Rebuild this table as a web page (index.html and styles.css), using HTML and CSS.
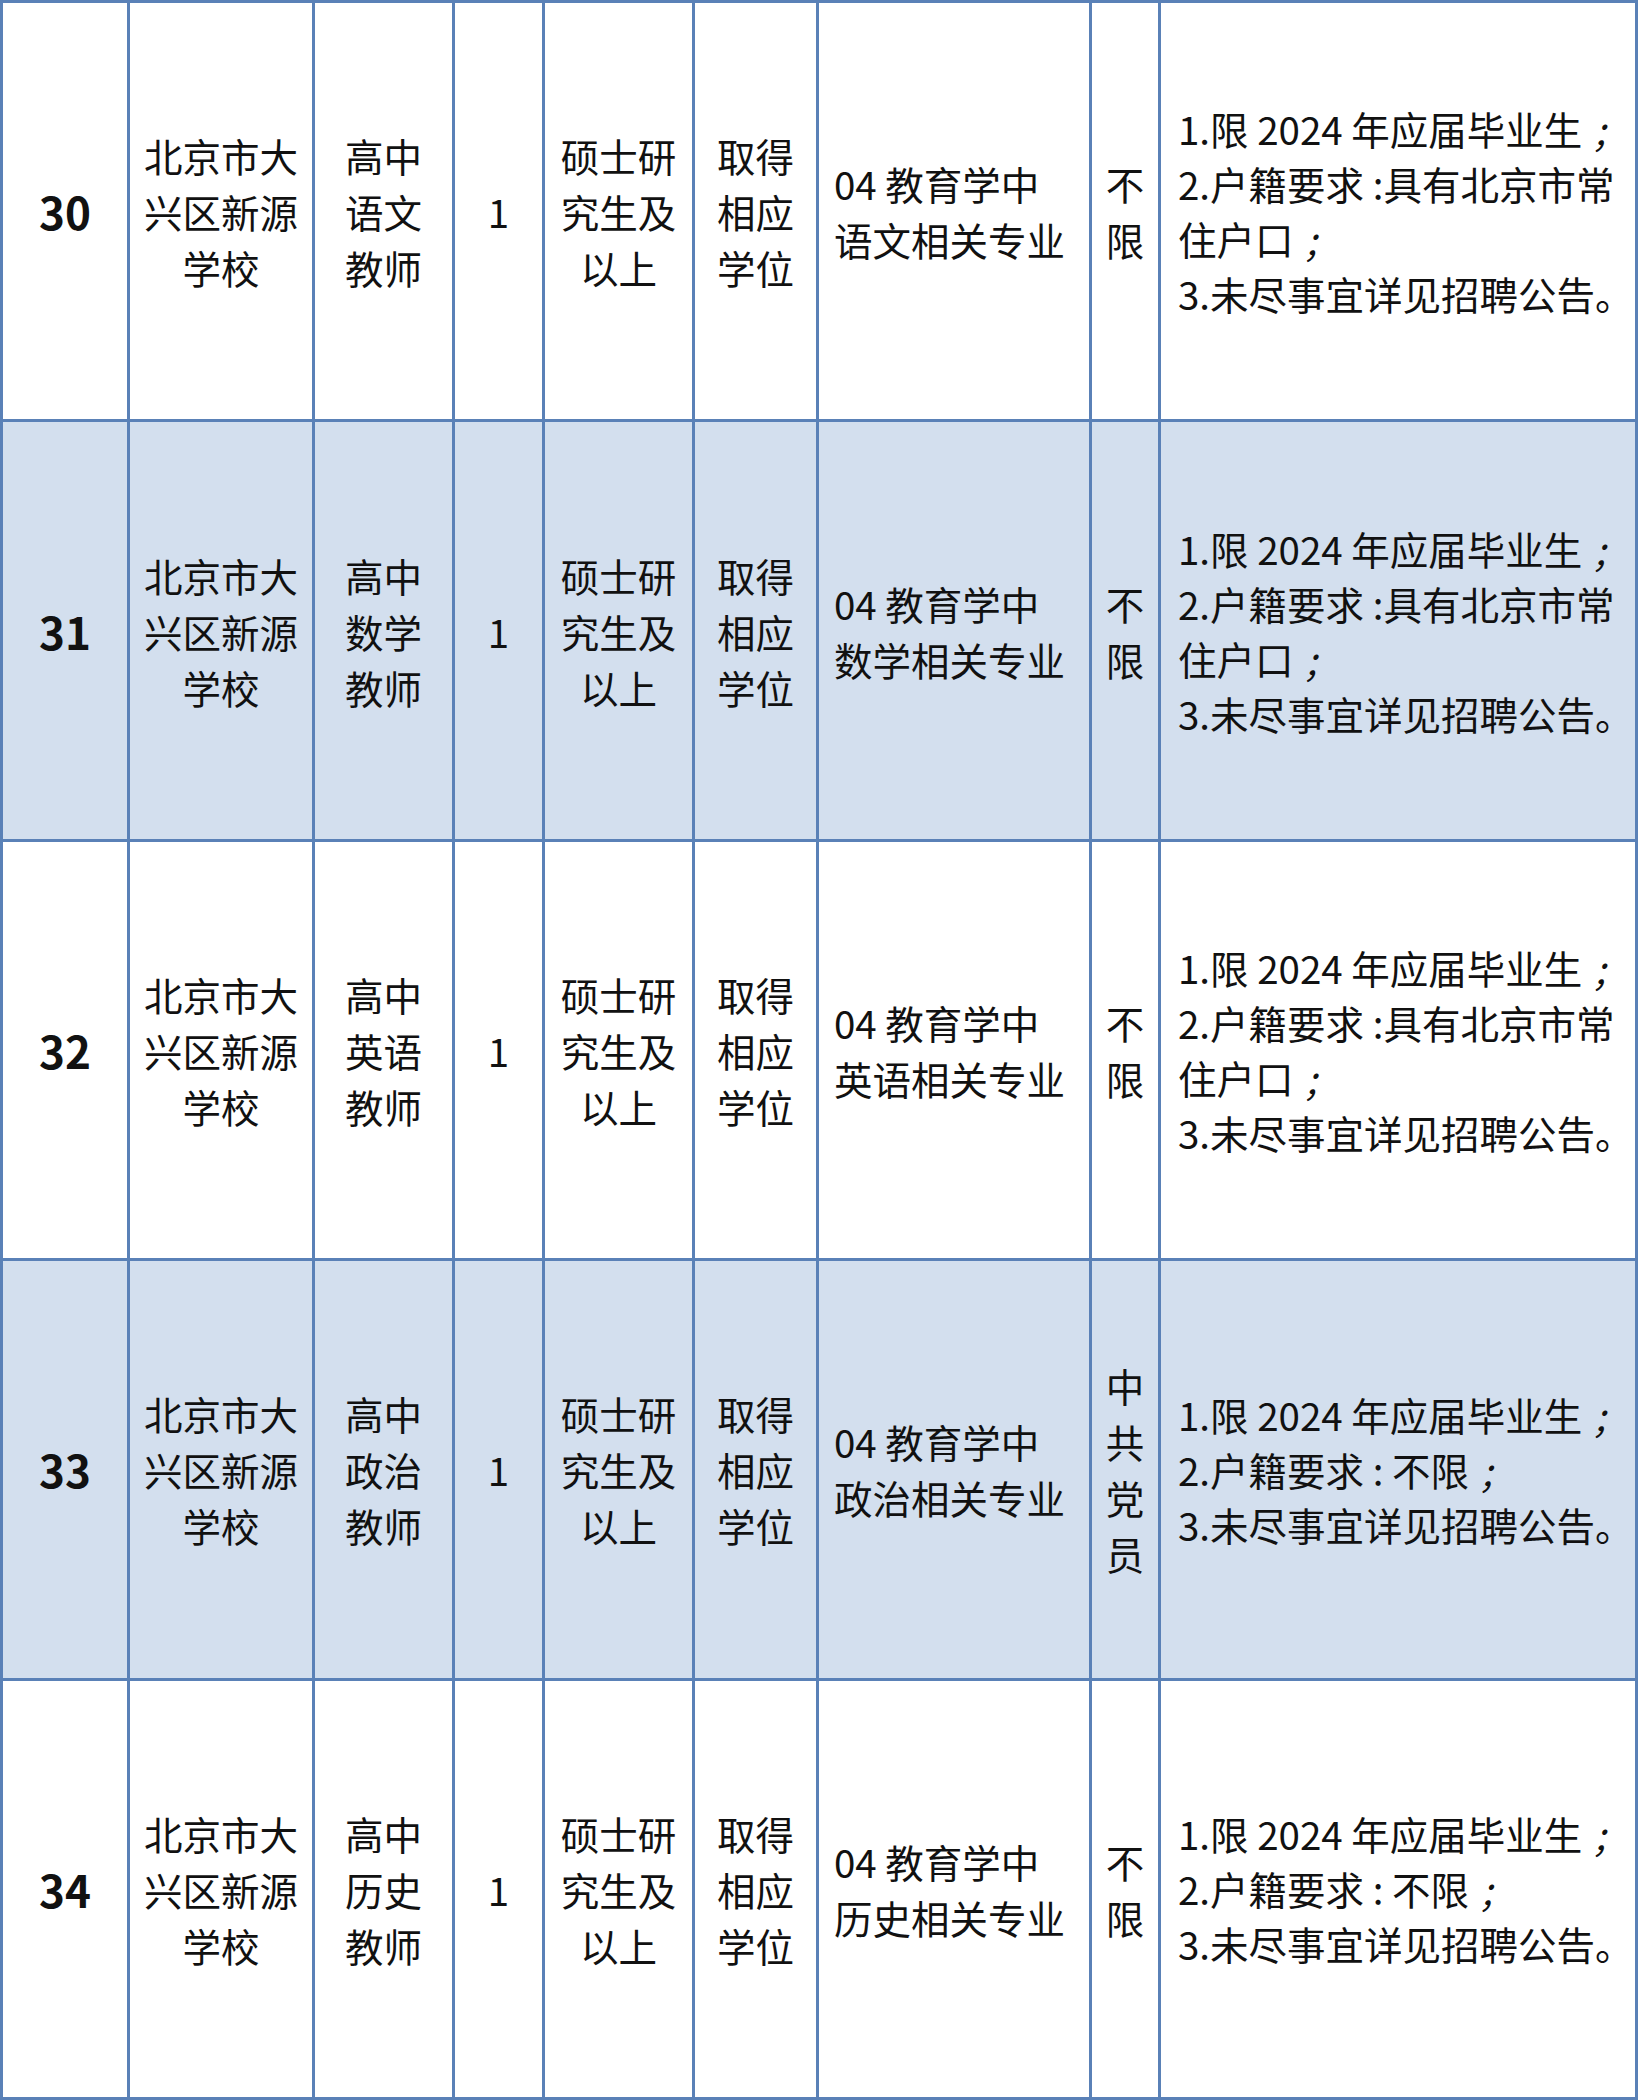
FILE: index.html
```html
<!DOCTYPE html>
<html lang="zh-CN">
<head>
<meta charset="utf-8">
<title>招聘岗位表</title>
<link rel="stylesheet" href="styles.css">
</head>
<body>
<table class="jobs">
  <colgroup>
    <col class="c-no"><col class="c-unit"><col class="c-post"><col class="c-num"><col class="c-edu"><col class="c-deg"><col class="c-major"><col class="c-pol"><col class="c-note">
  </colgroup>
  <tbody>
    <tr class="row">
      <td class="no">30</td>
      <td class="ctr">北京市大<br>兴区新源<br>学校</td>
      <td class="ctr">高中<br>语文<br>教师</td>
      <td class="ctr">1</td>
      <td class="ctr">硕士研<br>究生及<br>以上</td>
      <td class="ctr">取得<br>相应<br>学位</td>
      <td class="left major">04 教育学中<br>语文相关专业</td>
      <td class="ctr">不<br>限</td>
      <td class="left note">1.限 2024 年应届毕业生 <span class="semi">;</span><br>2.户籍要求 :具有北京市常<br>住户口 <span class="semi">;</span><br>3.未尽事宜详见招聘公告。</td>
    </tr>
    <tr class="row alt">
      <td class="no">31</td>
      <td class="ctr">北京市大<br>兴区新源<br>学校</td>
      <td class="ctr">高中<br>数学<br>教师</td>
      <td class="ctr">1</td>
      <td class="ctr">硕士研<br>究生及<br>以上</td>
      <td class="ctr">取得<br>相应<br>学位</td>
      <td class="left major">04 教育学中<br>数学相关专业</td>
      <td class="ctr">不<br>限</td>
      <td class="left note">1.限 2024 年应届毕业生 <span class="semi">;</span><br>2.户籍要求 :具有北京市常<br>住户口 <span class="semi">;</span><br>3.未尽事宜详见招聘公告。</td>
    </tr>
    <tr class="row">
      <td class="no">32</td>
      <td class="ctr">北京市大<br>兴区新源<br>学校</td>
      <td class="ctr">高中<br>英语<br>教师</td>
      <td class="ctr">1</td>
      <td class="ctr">硕士研<br>究生及<br>以上</td>
      <td class="ctr">取得<br>相应<br>学位</td>
      <td class="left major">04 教育学中<br>英语相关专业</td>
      <td class="ctr">不<br>限</td>
      <td class="left note">1.限 2024 年应届毕业生 <span class="semi">;</span><br>2.户籍要求 :具有北京市常<br>住户口 <span class="semi">;</span><br>3.未尽事宜详见招聘公告。</td>
    </tr>
    <tr class="row alt">
      <td class="no">33</td>
      <td class="ctr">北京市大<br>兴区新源<br>学校</td>
      <td class="ctr">高中<br>政治<br>教师</td>
      <td class="ctr">1</td>
      <td class="ctr">硕士研<br>究生及<br>以上</td>
      <td class="ctr">取得<br>相应<br>学位</td>
      <td class="left major">04 教育学中<br>政治相关专业</td>
      <td class="ctr">中<br>共<br>党<br>员</td>
      <td class="left note">1.限 2024 年应届毕业生 <span class="semi">;</span><br>2.户籍要求 : 不限 <span class="semi">;</span><br>3.未尽事宜详见招聘公告。</td>
    </tr>
    <tr class="row">
      <td class="no">34</td>
      <td class="ctr">北京市大<br>兴区新源<br>学校</td>
      <td class="ctr">高中<br>历史<br>教师</td>
      <td class="ctr">1</td>
      <td class="ctr">硕士研<br>究生及<br>以上</td>
      <td class="ctr">取得<br>相应<br>学位</td>
      <td class="left major">04 教育学中<br>历史相关专业</td>
      <td class="ctr">不<br>限</td>
      <td class="left note">1.限 2024 年应届毕业生 <span class="semi">;</span><br>2.户籍要求 : 不限 <span class="semi">;</span><br>3.未尽事宜详见招聘公告。</td>
    </tr>
  </tbody>
</table>
</body>
</html>
```

FILE: styles.css
```css
html, body {
  margin: 0;
  padding: 0;
  background: #ffffff;
}

body {
  font-family: "Noto Sans CJK SC", "Noto Sans", sans-serif;
  color: #111111;
}

.jobs {
  border-collapse: collapse;
  table-layout: fixed;
  width: 1635px;
  margin: 0;
}

.c-no { width: 127px; }
.c-unit { width: 185px; }
.c-post { width: 140px; }
.c-num { width: 90px; }
.c-edu { width: 150px; }
.c-deg { width: 124px; }
.c-major { width: 273px; }
.c-pol { width: 69px; }
.c-note { width: 477px; }

.row {
  height: 419.4px;
  background: #ffffff;
}

.row.alt {
  background: #d3dfee;
}

.jobs td {
  border: 3px solid #5a81b7;
  padding: 0;
  vertical-align: middle;
  font-size: 38.5px;
  line-height: 56px;
  white-space: nowrap;
  overflow: hidden;
}

.jobs td.no {
  text-align: center;
  font-weight: 700;
  font-size: 44px;
}

.jobs td.ctr {
  text-align: center;
}

.jobs td.left {
  text-align: left;
}

.jobs td.major {
  padding-left: 15px;
}

.jobs td.note {
  padding-left: 17px;
  line-height: 55px;
}

.semi {
  display: inline-block;
  font-style: italic;
  padding-left: 4px;
}
```
